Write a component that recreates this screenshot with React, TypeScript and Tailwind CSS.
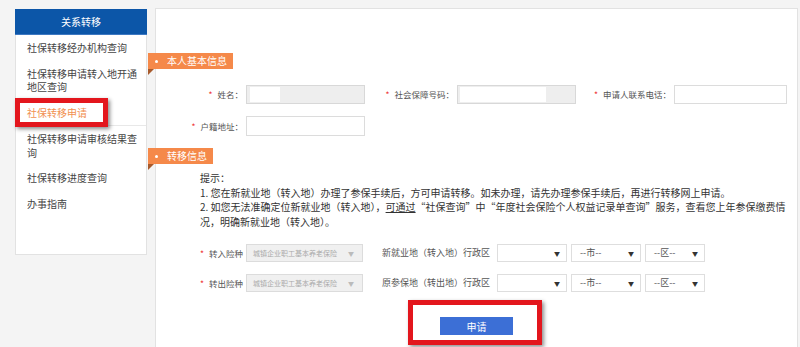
import React from "react";

const FONT = { fontFamily: '"Noto Sans CJK SC", "Noto Sans", sans-serif' };

function Tag({ text }: { text: string }) {
  return (
    <div className="-ml-[8px] flex flex-col items-start">
      <div className="flex h-[16px] items-center bg-[#f5894a] pl-[7px] pr-[6px]">
        <span className="h-[3px] w-[3px] rounded-full bg-white" />
        <span className="ml-[9px] text-[10px] leading-none text-white">{text}</span>
      </div>
      <div className="h-0 w-0 border-t-[6px] border-r-[6px] border-t-[#a85a2c] border-r-transparent" />
    </div>
  );
}

function Label({ w, text }: { w: string; text: string }) {
  return (
    <div className={`${w} flex shrink-0 items-center justify-end whitespace-nowrap text-[8.5px] text-[#555]`}>
      <span className="mr-[5px] text-[#e33]">*</span>
      <span>{text}</span>
    </div>
  );
}

function Sel({ w, text, pl }: { w: string; text: string; pl: string }) {
  return (
    <div
      className={`${w} ${pl} flex h-[18px] shrink-0 items-center justify-between border border-[#dedede] bg-white pr-[6px] text-[9px] text-[#555]`}
    >
      <span>{text}</span>
      <span className="text-[6px] text-[#333]">▼</span>
    </div>
  );
}

function SelectRow({ label, region, mt }: { label: string; region: string; mt: string }) {
  return (
    <div className={`${mt} flex items-center`}>
      <div className="flex w-[87px] shrink-0 items-center justify-end text-[8.5px] text-[#555]">
        <span className="mr-[5px] text-[#e33]">*</span>
        <span>{label}</span>
      </div>
      <div className="ml-[3px] flex h-[18px] w-[117px] shrink-0 items-center justify-between border border-[#dcdcdc] bg-[#f0f0f0] pl-[6px] pr-[8px] text-[7px] text-[#aaa]">
        <span>城镇企业职工基本养老保险</span>
        <span className="text-[6px] text-[#bbb]">▼</span>
      </div>
      <div className="ml-[19px] w-[112px] shrink-0 whitespace-nowrap text-[9px] text-[#555]">{region}</div>
      <div className="ml-[3px] flex gap-[4px]">
        <Sel w="w-[70px]" text="" pl="pl-[8px]" />
        <Sel w="w-[70px]" text="--市--" pl="pl-[8px]" />
        <Sel w="w-[60px]" text="--区--" pl="pl-[8px]" />
      </div>
    </div>
  );
}

export default function App() {
  return (
    <div
      className="flex h-[347px] w-[800px] items-start overflow-hidden bg-[#f4f4f4] pl-[15px] pt-[8px]"
      style={FONT}
    >
      {/* Sidebar */}
      <div className="mt-[1px] h-[246px] w-[132px] shrink-0 border border-[#e2e2e2] bg-white">
        <div className="-mx-px -mt-px flex h-[26px] items-center justify-center border-b border-[#3d78c2] bg-[#0c56a8] text-[10px] text-white">
          关系转移
        </div>
        <div className="whitespace-nowrap text-[10px] leading-[13.5px] text-[#444]">
          <div className="pl-[11px] py-[6px]">社保转移经办机构查询</div>
          <div className="pl-[11px] py-[6px]">
            社保转移申请转入地开通
            <br />
            地区查询
          </div>
          <div className="relative border-b border-[#e8e8e8] pl-[11px] py-[6px] text-[#f19050]">
            社保转移申请
            <div className="absolute -left-[1px] -top-[2px] h-[29px] w-[93px] border-[5px] border-[#e3161d] shadow-[2px_2px_4px_rgba(0,0,0,0.45)]" />
          </div>
          <div className="pl-[11px] py-[6px]">
            社保转移申请审核结果查
            <br />
            询
          </div>
          <div className="pl-[11px] py-[6px]">社保转移进度查询</div>
          <div className="pl-[11px] py-[6px]">办事指南</div>
        </div>
      </div>

      {/* Main panel */}
      <div className="ml-[8px] h-[400px] w-[643px] shrink-0 border border-[#e2e2e2] bg-white">
        <div className="pt-[44px]">
          <Tag text="本人基本信息" />

          {/* Row 1 */}
          <div className="mt-[10px] flex items-center">
            <Label w="w-[87px]" text="姓名：" />
            <div className="ml-[3px] flex h-[19px] w-[119px] shrink-0 items-center border border-[#d8d8d8] bg-[#eeeeee] pl-[3px]">
              <div className="h-[15px] w-[30px] bg-white" />
            </div>
            <Label w="w-[89px]" text="社会保障号码：" />
            <div className="ml-[3px] flex h-[19px] w-[119px] shrink-0 items-center border border-[#d8d8d8] bg-[#eeeeee] pl-[2px]">
              <div className="h-[15px] w-[86px] bg-white" />
            </div>
            <Label w="w-[95px]" text="申请人联系电话：" />
            <div className="ml-[3px] h-[19px] w-[113px] shrink-0 border border-[#dcdcdc] bg-white" />
          </div>

          {/* Row 2 */}
          <div className="mt-[12px] flex items-center">
            <Label w="w-[87px]" text="户籍地址：" />
            <div className="ml-[3px] h-[20px] w-[119px] shrink-0 border border-[#dcdcdc] bg-white" />
          </div>

          <div className="mt-[12px]">
            <Tag text="转移信息" />
          </div>

          {/* Tip */}
          <div className="mt-[1px] pl-[44px] text-[10px] leading-[14.5px] text-[#333]">
            <div>提示：</div>
            <div>1. 您在新就业地（转入地）办理了参保手续后，方可申请转移。如未办理，请先办理参保手续后，再进行转移网上申请。</div>
            <div className="whitespace-nowrap">
              2. 如您无法准确定位新就业地（转入地），<span className="underline">可通过</span>“社保查询”中“年度社会保险个人权益记录单查询”服务，查看您上年参保缴费情
            </div>
            <div>况，明确新就业地（转入地）。</div>
          </div>

          <SelectRow mt="mt-[15px]" label="转入险种" region="新就业地（转入地）行政区" />
          <SelectRow mt="mt-[12px]" label="转出险种" region="原参保地（转出地）行政区" />

          {/* Button */}
          <div className="mt-[25px] flex justify-center">
            <div className="relative">
              <div className="flex h-[18px] w-[73px] items-center justify-center bg-[#3c6fd6] text-[10px] text-white">
                申请
              </div>
              <div className="absolute -left-[32px] -top-[17px] h-[45px] w-[134px] border-[5px] border-[#e3161d] shadow-[2px_2px_4px_rgba(0,0,0,0.45)]" />
            </div>
          </div>
        </div>
      </div>
    </div>
  );
}
